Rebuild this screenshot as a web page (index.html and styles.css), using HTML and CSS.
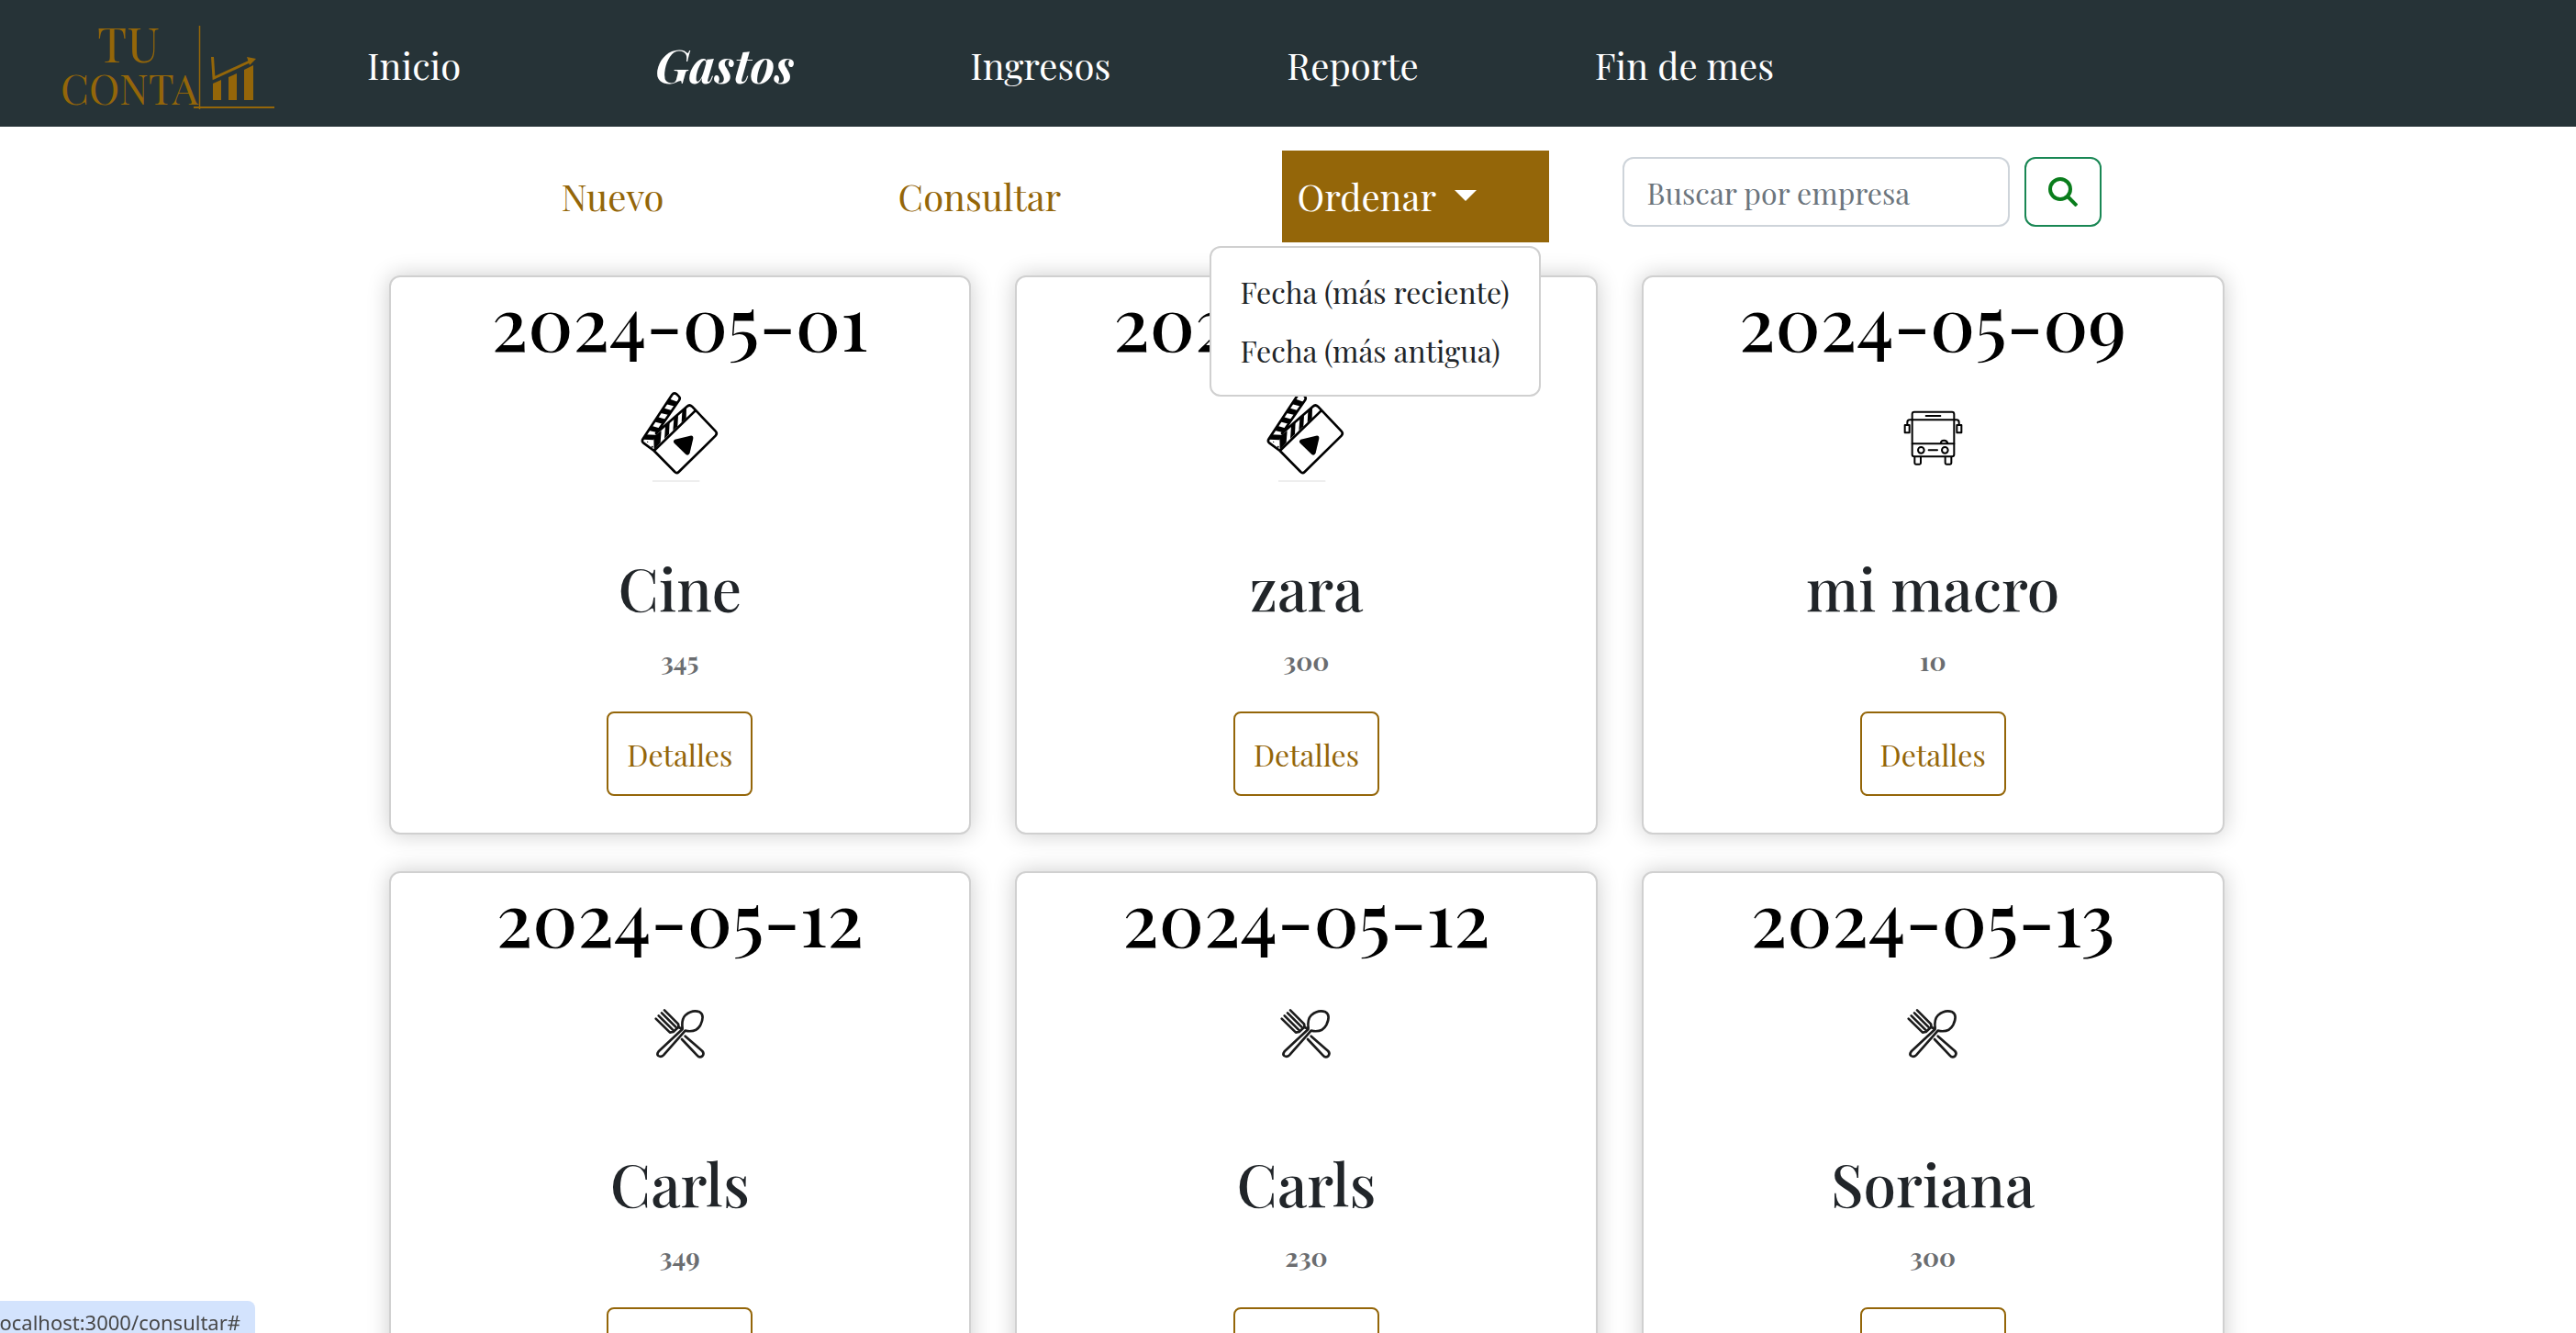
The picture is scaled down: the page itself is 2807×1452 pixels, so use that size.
FILE: index.html
```
<!DOCTYPE html>
<html lang="es">
<head>
<meta charset="utf-8">
<meta name="viewport" content="width=device-width, initial-scale=1">
<title>Tu Conta - Gastos</title>
<link rel="stylesheet" href="styles.css">
</head>
<body>
<svg class="sprite" aria-hidden="true">
  <symbol id="cine" viewBox="-13 0 390 390">
    <path d="M92 342H246" stroke="#e8e8e8" stroke-width="5"/>
    <g fill="none" stroke="#000" stroke-width="8" stroke-linejoin="round" stroke-linecap="round">
      <path d="M97 243L165 312Q171 319 178 312L298 194Q305 186 298 179L221 98Q213 91 205 98L104 186L179 78Q184 70 178 65L171 58Q162 52 156 60L61 204Q56 212 62 217L97 243L232 112"/>
    </g>
    <g fill="#000">
      <path d="M145 73L174 83L166 98L135 90Z"/>
      <path d="M126 103L157 112L148 127L116 119Z"/>
      <path d="M107 132L138 141L128 156L97 148Z"/>
      <path d="M88 161L119 170L109 184L78 176Z"/>
      <path d="M68 190L102 191L96 208L62 206Z"/>
      <path d="M96 196L121 178L118 216L97 240Z"/>
      <path d="M134 162L148 150L146 189L131 204Z"/>
      <path d="M162 139L176 127L174 163L159 177Z"/>
      <path d="M189 115L203 103L202 137L187 151Z"/>
      <path d="M165 206Q157 212 164 219L201 255Q210 261 214 250L225 203Q226 192 215 194Z"/>
      <circle cx="76" cy="214" r="2"/><circle cx="91" cy="230" r="3"/>
    </g>
  </symbol>
  <symbol id="bus" viewBox="-28 -30 390 390">
    <g fill="none" stroke="#000" stroke-width="6" stroke-linejoin="round" stroke-linecap="round">
      <rect x="100" y="86" width="137" height="146" rx="7"/>
      <path d="M145 99H192M100 112H237M100 190H237M154 211H182M84 128V120Q84 112 92 112H100M253 128V120Q253 112 245 112H237"/>
      <rect x="76" y="129" width="15" height="25"/>
      <rect x="246" y="129" width="15" height="25"/>
      <circle cx="129" cy="211" r="10"/>
      <circle cx="207" cy="211" r="10"/>
      <path d="M193 189Q194 179 204 179Q214 179 216 189"/>
      <path d="M108 233V253Q108 257 112 257H124Q128 257 128 253V233M208 233V253Q208 257 212 257H224Q228 257 228 253V233"/>
    </g>
  </symbol>
  <symbol id="comida" viewBox="-43 -33 390 390">
    <g fill="none" stroke="#1b1b1b" stroke-width="8" stroke-linejoin="round" stroke-linecap="round">
      <path d="M101 91L146 136L148 147L160 153L82 226Q75 235 81 240Q90 246 98 238L169 158Q205 166 219 139Q234 107 216 97Q193 88 170 107Q156 121 160 150"/>
      <path d="M92 100L138 146M82 109L128 155M73 119L119 164L130 162L146 147"/>
      <path d="M158 186L208 239Q216 248 225 241Q232 233 225 225L169 176"/>
    </g>
  </symbol>
</svg>

<header class="topbar">
  <a class="brand" href="#" aria-label="Tu Conta">
    <svg class="logo" viewBox="0 -4 240 100">
      <g class="logo-text">
        <text class="logo-top" x="73" y="45" text-anchor="middle">TU</text>
        <text x="74" y="91" text-anchor="middle">CONTA</text>
      </g>
      <g fill="none" stroke="#946609">
        <path d="M150.500 5V96" stroke-width="1.500"/>
        <path d="M144 94H232" stroke-width="2"/>
        <path d="M164.500 39L166 62L205 44" stroke-width="3"/>
      </g>
      <path fill="#946609" d="M202 39L212 41L205 48ZM165 68L174 64V86H165ZM182 61L191 57V86H182ZM199 53L209 48V86H199Z"/>
    </svg>
  </a>
  <nav class="mainnav">
    <a href="#">Inicio</a>
    <a href="#" class="active">Gastos</a>
    <a href="#">Ingresos</a>
    <a href="#">Reporte</a>
    <a href="#">Fin de mes</a>
  </nav>
</header>

<main class="page">
  <div class="toolbar">
    <a href="#" class="tool">Nuevo</a>
    <a href="#" class="tool">Consultar</a>
    <div class="dropdown">
      <button type="button" class="toggle" aria-expanded="true">Ordenar<span class="caret"></span></button>
      <div class="menu">
        <a href="#">Fecha (más reciente)</a>
        <a href="#">Fecha (más antigua)</a>
      </div>
    </div>
    <form class="search">
      <input type="search" placeholder="Buscar por empresa" aria-label="Buscar por empresa">
      <button type="button" aria-label="Buscar">
        <svg viewBox="0 0 32 32" width="32" height="32" fill="none" stroke="#0a7d1c" stroke-width="4"><circle cx="13" cy="13" r="11"/><path d="M21 21L31 31"/></svg>
      </button>
    </form>
  </div>

  <section class="cards">
    <article class="card">
      <h1>2024-05-01</h1>
      <svg class="icon"><use href="#cine"/></svg>
      <h2>Cine</h2>
      <p>345</p>
      <button type="button">Detalles</button>
    </article>
    <article class="card">
      <h1>2024-05-04</h1>
      <svg class="icon"><use href="#cine"/></svg>
      <h2>zara</h2>
      <p>300</p>
      <button type="button">Detalles</button>
    </article>
    <article class="card">
      <h1>2024-05-09</h1>
      <svg class="icon"><use href="#bus"/></svg>
      <h2>mi macro</h2>
      <p>10</p>
      <button type="button">Detalles</button>
    </article>
    <article class="card">
      <h1>2024-05-12</h1>
      <svg class="icon"><use href="#comida"/></svg>
      <h2>Carls</h2>
      <p>349</p>
      <button type="button">Detalles</button>
    </article>
    <article class="card">
      <h1>2024-05-12</h1>
      <svg class="icon"><use href="#comida"/></svg>
      <h2>Carls</h2>
      <p>230</p>
      <button type="button">Detalles</button>
    </article>
    <article class="card">
      <h1>2024-05-13</h1>
      <svg class="icon"><use href="#comida"/></svg>
      <h2>Soriana</h2>
      <p>300</p>
      <button type="button">Detalles</button>
    </article>
  </section>
</main>
<div class="status"><span>localhost:3000/consultar#</span></div>
</body>
</html>
```
FILE: styles.css
```
* { box-sizing: border-box; }

body {
  margin: 0;
  height: 100vh;
  overflow: hidden;
  background: #fff;
  color: #212529;
  font-family: "Playfair Display", "Liberation Serif", serif;
}

a { text-decoration: none; }
button, input { font-family: inherit; }
.sprite { display: none; }

/* Top bar */
.topbar {
  display: flex;
  align-items: center;
  height: 138px;
  padding-left: 67px;
  background: #263337;
}
.brand { display: flex; width: 333px; }
.logo { width: 240px; height: 100px; overflow: visible; }
.logo-text { fill: #946609; font-size: 45px; }
.logo-top { font-size: 52px; }
.mainnav {
  display: flex;
  align-items: center;
  gap: 192px;
  padding-top: 2px;
}
.mainnav a { color: #fff; font-size: 40px; white-space: nowrap; }
.mainnav .active {
  margin-left: 20px;
  font-size: 50px;
  font-weight: 700;
  font-style: italic;
}

/* Toolbar */
.page {
  max-width: 2040px;
  margin: 0 auto;
  padding-left: 40px;
}
.toolbar {
  display: flex;
  align-items: center;
  padding: 26px 0 36px 44px;
}
.tool {
  width: 400px;
  padding-bottom: 2px;
  color: #946609;
  font-size: 40px;
  text-align: center;
}
.dropdown { position: relative; margin: 0 80px 0 129px; }
.toggle {
  display: flex;
  align-items: center;
  gap: 20px;
  width: 291px;
  height: 100px;
  padding: 0 17px 2px;
  border: 0;
  background: #946609;
  color: #fff;
  font-size: 40px;
}
.caret {
  border: 12px solid transparent;
  border-top-color: #fff;
  border-bottom: 0;
}
.menu {
  position: absolute;
  top: 104px;
  right: 9px;
  z-index: 2;
  width: 361px;
  padding: 16px 0;
  border: 2px solid #d0d0d0;
  border-radius: 12px;
  background: #fff;
}
.menu a {
  display: block;
  padding-left: 32px;
  color: #212529;
  font-size: 32px;
  line-height: 64px;
  white-space: nowrap;
}
.search { display: flex; gap: 16px; padding-bottom: 10px; }
.search input {
  width: 422px;
  height: 76px;
  padding: 0 25px;
  border: 2px solid #ced4da;
  border-radius: 12px;
  background: #fff;
  font-size: 32px;
}
.search input::placeholder { color: #6c757d; }
.search button {
  display: flex;
  align-items: center;
  justify-content: center;
  width: 84px;
  border: 2px solid #198754;
  border-radius: 12px;
  background: #fff;
}

/* Expense cards */
.cards {
  display: grid;
  grid-template-columns: repeat(3, 1fr);
  gap: 40px 48px;
}
.card {
  display: flex;
  flex-direction: column;
  align-items: center;
  padding-bottom: 40px;
  border: 2px solid #d0d0d0;
  border-radius: 12px;
  background: #fff;
  box-shadow: 0 0 24px rgba(0, 0, 0, 0.2);
}
.card h1 {
  margin: 0;
  color: #000;
  font-size: 80px;
  font-weight: 500;
  line-height: 96px;
}
.icon { width: 130px; height: 130px; margin-top: 12px; }
.card h2 {
  margin: 58px 0 20px;
  font-size: 64px;
  font-weight: 500;
  line-height: 84px;
}
.card p {
  margin: 0 0 37px;
  color: #6b6d70;
  font-size: 28px;
  font-weight: 700;
  line-height: 36px;
}
.card button {
  width: 159px;
  height: 92px;
  padding: 0;
  border: 2px solid #946609;
  border-radius: 8px;
  background: #fff;
  color: #946609;
  font-size: 32px;
}

/* Link address bubble */
.status {
  position: fixed;
  bottom: 0;
  left: 0;
  display: flex;
  justify-content: flex-end;
  width: 278px;
  height: 35px;
  padding-right: 16px;
  overflow: hidden;
  border-top-right-radius: 8px;
  background: #d3e3fd;
  color: #474747;
  font: 22px/46px "Noto Sans", sans-serif;
}
```
